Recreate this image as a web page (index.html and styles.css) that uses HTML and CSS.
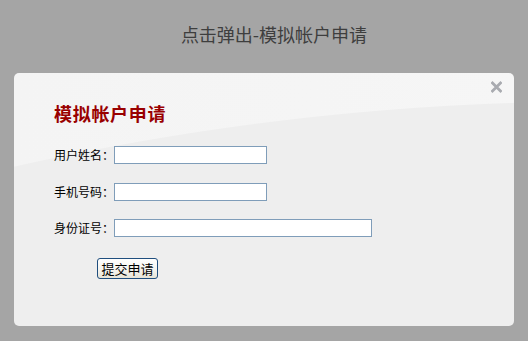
FILE: index.html
```html
<!DOCTYPE html>
<html lang="zh-CN">
<head>
<meta charset="utf-8">
<title>模拟帐户申请</title>
<link rel="stylesheet" href="styles.css">
</head>
<body>
<h1 class="page-title">点击弹出-模拟帐户申请</h1>
<div class="modal">
  <a class="close" href="#" aria-label="关闭">
    <svg width="11" height="12" viewBox="0 0 11 12"><path d="M1.5 2 L9.5 10 M9.5 2 L1.5 10" stroke="#a9abb0" stroke-width="2.8" stroke-linecap="square"/></svg>
  </a>
  <h2 class="modal-title">模拟帐户申请</h2>
  <form class="form">
    <div class="row"><label class="label">用户姓名：</label><input class="field" type="text"></div>
    <div class="row row-2"><label class="label">手机号码：</label><input class="field" type="text"></div>
    <div class="row"><label class="label">身份证号：</label><input class="field field-wide" type="text"></div>
    <div class="actions"><button class="btn" type="button">提交申请</button></div>
  </form>
</div>
</body>
</html>
```
FILE: styles.css
```css
html, body {
  margin: 0;
  padding: 0;
}
body {
  background: #a5a5a5;
  font-family: "Noto Sans CJK SC", "Liberation Sans", sans-serif;
  width: 528px;
  height: 341px;
  overflow: hidden;
}
.page-title {
  margin: 22px 0 27px;
  padding-left: 20px;
  text-align: center;
  font-size: 18px;
  line-height: 24px;
  font-weight: normal;
  color: #3e3e3e;
}
.modal {
  position: relative;
  box-sizing: border-box;
  width: 500px;
  height: 253px;
  margin: 0 14px;
  padding: 29px 40px 0;
  border-radius: 5px;
  background:
    radial-gradient(circle 2667px at 586px 2695px, #eeeeee 2666px, rgba(238,238,238,0) 2667px),
    linear-gradient(90deg, #f4f4f4 0%, #f5f5f5 60%, #f6f6f6 100%);
  overflow: hidden;
}
.close {
  position: absolute;
  top: 8px;
  right: 12px;
  width: 11px;
  height: 12px;
  display: block;
}
.close svg {
  display: block;
}
.modal-title {
  margin: 0;
  font-size: 18px;
  line-height: 22px;
  font-weight: bold;
  letter-spacing: 0.7px;
  color: #990000;
}
.form {
  margin-top: 22px;
  display: flex;
  flex-direction: column;
  gap: 18px;
}
.row {
  display: flex;
  align-items: center;
  height: 18px;
}
.row-2 {
  margin-top: 1px;
}
.label {
  font-size: 12px;
  line-height: 18px;
  width: 60px;
  color: #000;
  white-space: nowrap;
}
.field {
  box-sizing: border-box;
  width: 153px;
  height: 18px;
  margin: 0;
  padding: 0 2px;
  border: 1px solid #7f9db9;
  background: #fff;
  outline: none;
}
.field-wide {
  width: 258px;
}
.actions {
  padding-left: 43px;
}
.btn {
  box-sizing: border-box;
  width: 61px;
  height: 21px;
  margin: 0;
  padding: 0;
  border: 1px solid #1f4e7e;
  border-radius: 3px;
  background: linear-gradient(#ffffff, #f4f3ee 60%, #e6e3d6);
  font-family: "Noto Sans CJK SC", sans-serif;
  font-size: 13px;
  line-height: 19px;
  color: #000;
}
```
